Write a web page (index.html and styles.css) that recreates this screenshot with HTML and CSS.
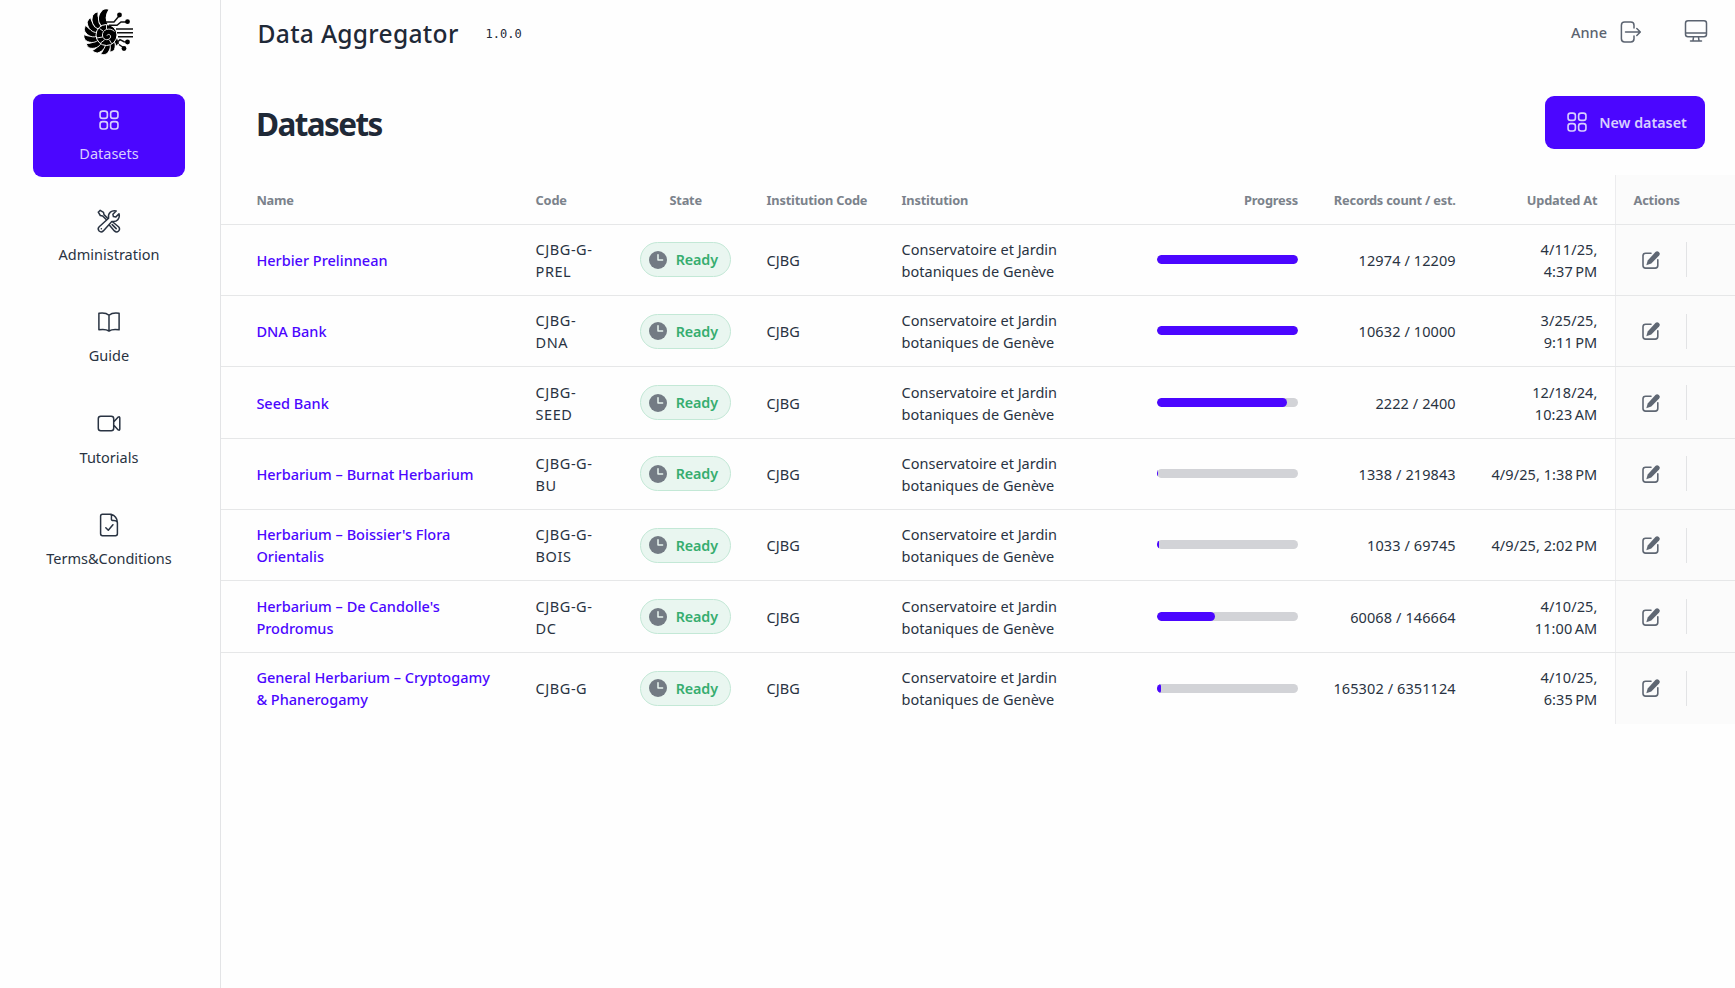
FILE: index.html
```
<!DOCTYPE html>
<html lang="en">
<head>
<meta charset="utf-8">
<title>Data Aggregator</title>
<link rel="stylesheet" href="styles.css">
</head>
<body>
<svg class="sprite" aria-hidden="true">
  <symbol id="grid" viewBox="0 0 24 24"><g fill="none" stroke="currentColor" stroke-width="1.5"><rect x="3.75" y="3.75" width="6.75" height="6.75" rx="2.25"/><rect x="13.5" y="3.75" width="6.75" height="6.75" rx="2.25"/><rect x="3.75" y="13.5" width="6.75" height="6.75" rx="2.25"/><rect x="13.5" y="13.5" width="6.75" height="6.75" rx="2.25"/></g></symbol>
  <symbol id="clock" viewBox="0 0 18 18"><circle cx="9" cy="9" r="9" fill="#737b84"/><path d="M9 3.7v5.4h4.6" fill="none" stroke="#e9f6f0" stroke-width="1.5" stroke-linecap="round" stroke-linejoin="round"/></symbol>
  <symbol id="edit" viewBox="0 0 18 18"><path d="M9 2.2H3.6Q1 2.2 1 4.8v9.7q0 2.6 2.6 2.6h9.6q2.6 0 2.6-2.6V8.8" fill="none" stroke="#5f6773" stroke-width="1.6" stroke-linecap="round"/><path d="M13.4 1.1q1.6-1.5 3.4-.2 1.900 1.700.3 3.500L9.300 12.600 4.300 14.300 5.700 9.500z" fill="#5f6773"/></symbol>
</svg>
<div class="app">
  <aside class="sidebar">
    <svg class="logo" width="50" height="46" viewBox="0 0 50 46">
      <g transform="translate(21.5 25)">
        <g stroke="#fff" stroke-width="1">
          <path transform="rotate(125) scale(.62)" d="M-4-9C-7-13-7-20-1-25 1-26 4-26 6-25 1-19 1-14 4-9z"/>
          <path transform="rotate(153) scale(.72)" d="M-4-9C-7-13-7-20-1-25 1-26 4-26 6-25 1-19 1-14 4-9z"/>
          <path transform="rotate(180) scale(.8)" d="M-4-9C-7-13-7-20-1-25 1-26 4-26 6-25 1-19 1-14 4-9z"/>
          <path transform="rotate(205) scale(.82)" d="M-4-9C-7-13-7-20-1-25 1-26 4-26 6-25 1-19 1-14 4-9z"/>
          <path transform="rotate(230) scale(.84)" d="M-4-9C-7-13-7-20-1-25 1-26 4-26 6-25 1-19 1-14 4-9z"/>
          <path transform="rotate(255) scale(.84)" d="M-4-9C-7-13-7-20-1-25 1-26 4-26 6-25 1-19 1-14 4-9z"/>
          <path transform="rotate(280) scale(.84)" d="M-4-9C-7-13-7-20-1-25 1-26 4-26 6-25 1-19 1-14 4-9z"/>
          <path transform="rotate(304) scale(.86)" d="M-4-9C-7-13-7-20-1-25 1-26 4-26 6-25 1-19 1-14 4-9z"/>
          <path transform="rotate(328) scale(.91)" d="M-4-9C-7-13-7-20-1-25 1-26 4-26 6-25 1-19 1-14 4-9z"/>
          <path transform="rotate(355) scale(.97)" d="M-4-9C-7-13-7-20-1-25 1-26 4-26 6-25 1-19 1-14 4-9z"/>
          <circle cx="1" cy="1" r="10.5"/>
        </g>
        <path d="M1.500 1.500c1-2 4-1 3.500 1.500C4.500 6.500-2 7-3 2-4-5 5-7 9-2.500M-2.500-3-6-5.500M-3 3l-6 1M-1 6l-4 3M4 6l2 3.500M1-5v-4" fill="none" stroke="#fff" stroke-width=".9"/>
      </g>
      <g fill="none" stroke="#111" stroke-width="1.5">
        <path d="M22 13h8l5-6M25 16.300h8l4-3.300h6M32 20h17M33 23.800h16M34 27.700h15M34 35v-2.500l2-1.800 4 2 4 .3M35 35.500l5 3.500"/>
      </g>
      <g fill="#000"><circle cx="35.500" cy="6" r="2.400"/><circle cx="43.500" cy="12.700" r="2.400"/><circle cx="43.500" cy="33" r="2.400"/><circle cx="40" cy="39.500" r="2.400"/></g>
    </svg>
    <nav class="nav">
      <a class="nav-item active"><svg class="ico"><use href="#grid"/></svg><span>Datasets</span></a>
      <a class="nav-item"><svg class="ico" viewBox="0 0 26 26"><g fill="none" stroke="currentColor" stroke-width="1.5" stroke-linejoin="round" stroke-linecap="round"><path d="M12.600 10.200q-.8-3.800 1.700-6 2.600-2.100 5.900-1.200l-3.300 3.300.5 2.300 2.300.5L23 5.800q1 3.300-1.200 5.900-2.200 2.500-6 1.700l-8.500 9.500q-2 2-4.200.1-1.900-2.200.1-4.200z"/><path d="M2.300 4.200 4.200 2.300 7.500 4.300 8 6.600l3.600 3.600M2.300 4.200l2 3.300 2.300.5 3.800 3.800M16.800 14l5.700 4.800q2 2.200.1 4.200-2.100 2-4.200-.1l-4.900-5.600M16.200 16.600l4 4M5.300 20.700h.1"/></g></svg><span>Administration</span></a>
      <a class="nav-item"><svg class="ico" viewBox="0 0 26 26"><path d="M13 6.300Q9.500 3.200 2.900 4.300v16.500Q9.500 19.700 13 22q3.500-2.300 10.100-1.200V4.300Q16.500 3.200 13 6.300V22" fill="none" stroke="currentColor" stroke-width="1.5" stroke-linejoin="round"/></svg><span>Guide</span></a>
      <a class="nav-item"><svg class="ico" viewBox="0 0 26 26"><path d="M4.800 5.200h10.400q2.500 0 2.500 2.500v9.600q0 2.500-2.500 2.500H4.800q-2.500 0-2.500-2.500V7.700q0-2.500 2.500-2.500zM17.900 10.700l4.300-4.600q1.600-1 1.600.8v11.200q0 1.800-1.600.8l-4.300-4.600" fill="none" stroke="currentColor" stroke-width="1.5" stroke-linejoin="round"/></svg><span>Tutorials</span></a>
      <a class="nav-item"><svg class="ico" viewBox="0 0 26 26"><path d="M15 2.300H6.500q-1.900 0-1.900 1.900v17.600q0 1.900 1.900 1.900h13q1.900 0 1.900-1.900V10.500Q21 4 15 2.300q.8 1.500.4 4.300-.2 2 2 2 2.600-.2 4 1.800M9.800 15.800l2.500 2.500 4.600-5.600" fill="none" stroke="currentColor" stroke-width="1.5" stroke-linejoin="round" stroke-linecap="round"/></svg><span>Terms&amp;Conditions</span></a>
    </nav>
  </aside>
  <main class="main">
    <header class="topbar">
      <span class="brand">Data Aggregator</span>
      <span class="version">1.0.0</span>
      <span class="user">Anne</span>
      <svg class="logout" width="22" height="22" viewBox="0 0 22 22"><path d="M14 7V4.200Q14 1 10.800 1H4.600Q1.400 1 1.400 4.200v13.600Q1.400 21 4.600 21h6.200q3.200 0 3.200-3.200V15M5.500 11H20M16.800 7.500 20.300 11l-3.500 3.500" fill="none" stroke="currentColor" stroke-width="1.5" stroke-linecap="round" stroke-linejoin="round"/></svg>
      <svg class="monitor" width="24" height="24" viewBox="0 0 24 24"><path d="M4 1.800h16q2.500 0 2.500 2.500v10.900q0 2.500-2.500 2.500H4q-2.500 0-2.500-2.500V4.300q0-2.500 2.500-2.500zM1.500 14h21M9.600 17.700 9 21.700M14.400 17.700l.6 4M6.500 22h11" fill="none" stroke="currentColor" stroke-width="1.5" stroke-linecap="round"/></svg>
    </header>
    <section class="heading">
      <h1 class="title">Datasets</h1>
      <button class="new-btn"><svg class="ico"><use href="#grid"/></svg><span>New dataset</span></button>
    </section>
    <div class="table">
      <div class="row head">
        <div class="cell"><span class="th">Name</span></div><div class="cell"><span class="th">Code</span></div><div class="cell center"><span class="th">State</span></div><div class="cell"><span class="th">Institution Code</span></div><div class="cell"><span class="th">Institution</span></div><div class="cell right"><span class="th">Progress</span></div><div class="cell right"><span class="th">Records count / est.</span></div><div class="cell right"><span class="th">Updated At</span></div><div class="cell actions"><span class="th">Actions</span></div>
      </div>
      <div class="row">
        <div class="cell name">Herbier Prelinnean</div><div class="cell code">CJBG-G-<br>PREL</div><div class="cell center"><span class="badge"><svg class="clock"><use href="#clock"/></svg><span>Ready</span></span></div><div class="cell">CJBG</div><div class="cell inst">Conservatoire et Jardin<br>botaniques de Genève</div><div class="cell"><div class="bar"><div class="fill" style="width:100%"></div></div></div><div class="cell right num">12974 / 12209</div><div class="cell right date">4/11/25,<br>4:37&#8239;PM</div><div class="cell actions"><svg class="edit"><use href="#edit"/></svg><i class="sep"></i></div>
      </div>
      <div class="row">
        <div class="cell name">DNA Bank</div><div class="cell code">CJBG-<br>DNA</div><div class="cell center"><span class="badge"><svg class="clock"><use href="#clock"/></svg><span>Ready</span></span></div><div class="cell">CJBG</div><div class="cell inst">Conservatoire et Jardin<br>botaniques de Genève</div><div class="cell"><div class="bar"><div class="fill" style="width:100%"></div></div></div><div class="cell right num">10632 / 10000</div><div class="cell right date">3/25/25,<br>9:11&#8239;PM</div><div class="cell actions"><svg class="edit"><use href="#edit"/></svg><i class="sep"></i></div>
      </div>
      <div class="row">
        <div class="cell name">Seed Bank</div><div class="cell code">CJBG-<br>SEED</div><div class="cell center"><span class="badge"><svg class="clock"><use href="#clock"/></svg><span>Ready</span></span></div><div class="cell">CJBG</div><div class="cell inst">Conservatoire et Jardin<br>botaniques de Genève</div><div class="cell"><div class="bar"><div class="fill" style="width:92.4%"></div></div></div><div class="cell right num">2222 / 2400</div><div class="cell right date">12/18/24,<br>10:23&#8239;AM</div><div class="cell actions"><svg class="edit"><use href="#edit"/></svg><i class="sep"></i></div>
      </div>
      <div class="row">
        <div class="cell name">Herbarium – Burnat Herbarium</div><div class="cell code">CJBG-G-<br>BU</div><div class="cell center"><span class="badge"><svg class="clock"><use href="#clock"/></svg><span>Ready</span></span></div><div class="cell">CJBG</div><div class="cell inst">Conservatoire et Jardin<br>botaniques de Genève</div><div class="cell"><div class="bar"><div class="fill" style="width:.61%"></div></div></div><div class="cell right num">1338 / 219843</div><div class="cell right date">4/9/25, 1:38&#8239;PM</div><div class="cell actions"><svg class="edit"><use href="#edit"/></svg><i class="sep"></i></div>
      </div>
      <div class="row">
        <div class="cell name">Herbarium – Boissier's Flora<br>Orientalis</div><div class="cell code">CJBG-G-<br>BOIS</div><div class="cell center"><span class="badge"><svg class="clock"><use href="#clock"/></svg><span>Ready</span></span></div><div class="cell">CJBG</div><div class="cell inst">Conservatoire et Jardin<br>botaniques de Genève</div><div class="cell"><div class="bar"><div class="fill" style="width:1.48%"></div></div></div><div class="cell right num">1033 / 69745</div><div class="cell right date">4/9/25, 2:02&#8239;PM</div><div class="cell actions"><svg class="edit"><use href="#edit"/></svg><i class="sep"></i></div>
      </div>
      <div class="row">
        <div class="cell name">Herbarium – De Candolle's<br>Prodromus</div><div class="cell code">CJBG-G-<br>DC</div><div class="cell center"><span class="badge"><svg class="clock"><use href="#clock"/></svg><span>Ready</span></span></div><div class="cell">CJBG</div><div class="cell inst">Conservatoire et Jardin<br>botaniques de Genève</div><div class="cell"><div class="bar"><div class="fill" style="width:41%"></div></div></div><div class="cell right num">60068 / 146664</div><div class="cell right date">4/10/25,<br>11:00&#8239;AM</div><div class="cell actions"><svg class="edit"><use href="#edit"/></svg><i class="sep"></i></div>
      </div>
      <div class="row last">
        <div class="cell name">General Herbarium – Cryptogamy<br>&amp; Phanerogamy</div><div class="cell code">CJBG-G</div><div class="cell center"><span class="badge"><svg class="clock"><use href="#clock"/></svg><span>Ready</span></span></div><div class="cell">CJBG</div><div class="cell inst">Conservatoire et Jardin<br>botaniques de Genève</div><div class="cell"><div class="bar"><div class="fill" style="width:2.6%"></div></div></div><div class="cell right num">165302 / 6351124</div><div class="cell right date">4/10/25,<br>6:35&#8239;PM</div><div class="cell actions"><svg class="edit"><use href="#edit"/></svg><i class="sep"></i></div>
      </div>
    </div>
  </main>
</div>
</body>
</html>
```
FILE: styles.css
```
* { box-sizing: border-box; }
body { margin: 0; background: #fefefe; color: #293342; font: 14.5px/22px "Noto Sans", sans-serif; }
.sprite { position: absolute; width: 0; height: 0; }
.app { display: flex; height: 988px; overflow: hidden; }
.sidebar { width: 221px; flex: none; border-right: 1px solid #e3e4e6; padding: 9px 35px 0 33px; }
.logo { display: block; margin: 0 auto; }
.nav { display: flex; flex-direction: column; gap: 18.2px; margin-top: 39px; }
.nav-item { height: 83px; border-radius: 9px; display: flex; flex-direction: column; align-items: center; padding-top: 13px; gap: 9px; white-space: nowrap; }
.active { background: #4b06ff; color: #d8ceff; }
.ico { width: 26px; height: 26px; flex: none; display: block; }
.main { flex: 1; min-width: 0; }
.topbar { height: 70px; display: flex; align-items: center; padding: 0 27px 6px 36.5px; color: #5b6370; }
.brand { font-size: 24.6px; line-height: 34px; font-weight: 500; letter-spacing: .29px; color: #1f2937; margin-top: 4px; white-space: nowrap; }
.version { font: 12px/16px "DejaVu Sans Mono", monospace; color: #1f2937; margin-left: 27px; margin-top: 4px; }
.user { margin-left: auto; font-weight: 500; }
.logout { margin-left: 13px; }
.monitor { margin-left: 42px; margin-bottom: 2px; }
.heading { height: 105px; display: flex; align-items: flex-start; justify-content: space-between; padding: 26px 30px 0 35px; }
.title { margin: 8px 0 0; font-size: 31.5px; line-height: 40px; font-weight: 700; letter-spacing: -1.6px; color: #1f2937; }
.new-btn { margin: 0; border: 0; width: 160px; height: 53px; border-radius: 9px; background: #4b06ff; color: #d8ceff; display: flex; align-items: center; justify-content: center; gap: 9px; padding: 0 0 0 1px; font: 600 14.3px/22px "Noto Sans", sans-serif; white-space: nowrap; }
.new-btn .ico { margin-bottom: 2px; }
.new-btn span { padding-top: 1px; }
.row { display: grid; grid-template-columns: 297px 104.4px 126.6px 135px 255.4px 176.2px 157.8px 141.6px 120px; height: 71.35px; border-bottom: 1px solid #e6e7e8; }
.head { height: 49.7px; color: #7b828b; font-size: 12.8px; font-weight: 700; letter-spacing: -.2px; }
.th { padding-top: 1px; }
.last { border-bottom: 0; }
.cell { display: flex; align-items: center; padding: 0 17.6px; white-space: nowrap; }
.cell:first-child { padding-left: 35.4px; }
.center { justify-content: center; }
.right { justify-content: flex-end; text-align: right; }
.name { color: #4b06ff; font-weight: 500; }
.code { letter-spacing: .55px; }
.num { letter-spacing: .1px; }
.date { letter-spacing: .08px; }
.badge { display: flex; align-items: center; gap: 8.5px; width: 91px; height: 35px; border: 1px solid #c3e8d6; border-radius: 18px; background: #e9f6f0; color: #36ad6f; font-weight: 600; font-size: 14.3px; letter-spacing: -.1px; padding-left: 8px; flex: none; }
.badge span { padding-top: 1px; }
.clock { width: 18px; height: 18px; }
.bar { width: 141px; height: 9px; border-radius: 5px; background: #d2d3d7; overflow: hidden; margin-bottom: .6px; }
.fill { height: 100%; background: #4b06ff; border-radius: 5px; }
.actions { background: #fbfbfb; border-left: 1px solid #ececee; }
.edit { width: 18px; height: 18px; margin-left: 8px; flex: none; }
.sep { width: 1px; height: 35px; background: #e2e3e5; margin-left: 26px; }
```
